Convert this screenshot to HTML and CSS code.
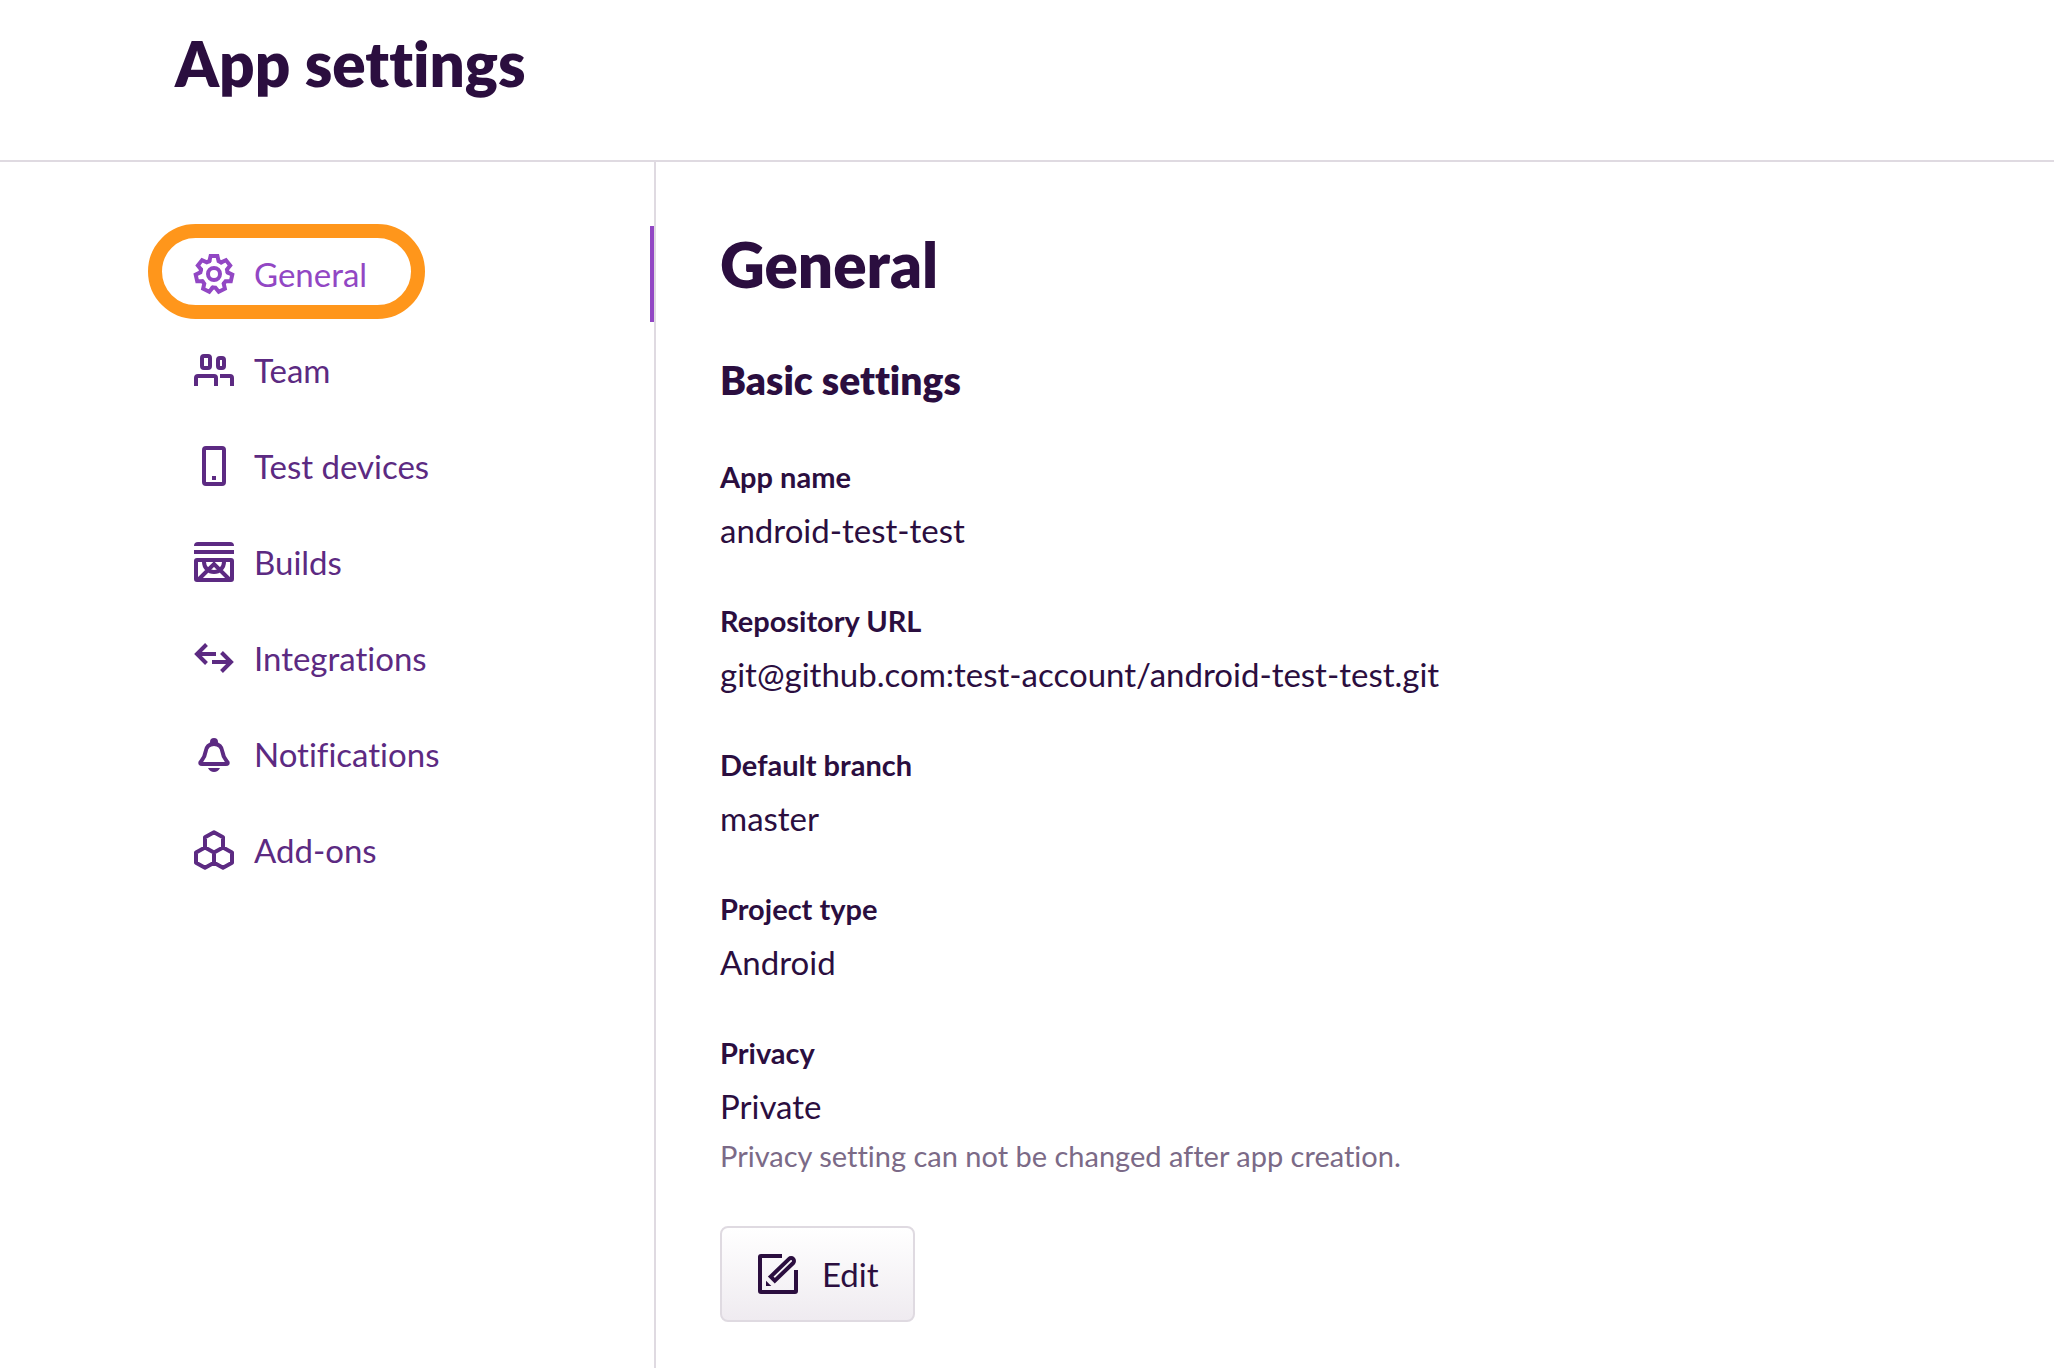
FILE: index.html
```html
<!DOCTYPE html>
<html lang="en">
<head>
<meta charset="utf-8">
<meta name="viewport" content="width=device-width, initial-scale=1">
<title>App settings</title>
<link rel="stylesheet" href="styles.css">
</head>
<body>
<header class="page-header">
  <h1 class="page-title">App settings</h1>
</header>
<div class="layout">
  <nav class="sidebar" aria-label="App settings">
    <a class="nav-item nav-item-active" href="#general" aria-current="page">
      <svg class="icon" viewBox="0 0 48 48" aria-hidden="true">
        <g transform="translate(24 24)">
          <path id="tooth" stroke-linecap="round" d="M-4.6 -12.9L-3.4 -18H3.4L4.6 -12.9L7.2 -11.6"/>
          <use href="#tooth" transform="rotate(51.43)"/>
          <use href="#tooth" transform="rotate(102.86)"/>
          <use href="#tooth" transform="rotate(154.29)"/>
          <use href="#tooth" transform="rotate(205.71)"/>
          <use href="#tooth" transform="rotate(257.14)"/>
          <use href="#tooth" transform="rotate(308.57)"/>
          <circle r="6"/>
        </g>
      </svg>
      <span>General</span>
    </a>
    <a class="nav-item" href="#team">
      <svg class="icon" viewBox="0 0 48 48" aria-hidden="true">
        <rect x="12" y="10" width="8" height="12" rx="2"/>
        <rect x="28" y="12" width="6" height="10" rx="2"/>
        <path d="M6 40V32q0-2 2-2H24q2 0 2 2V40M30 30H40q2 0 2 2V40"/>
      </svg>
      <span>Team</span>
    </a>
    <a class="nav-item" href="#devices">
      <svg class="icon" viewBox="0 0 48 48" aria-hidden="true">
        <rect x="14" y="6" width="20" height="36" rx="2"/>
        <path d="M22 36h4"/>
      </svg>
      <span>Test devices</span>
    </a>
    <a class="nav-item" href="#builds">
      <svg class="icon" viewBox="0 0 48 48" aria-hidden="true">
        <path class="solid" d="M4 8q0-4 4-4H40q4 0 4 4z"/>
        <path d="M4 14H44"/>
        <rect x="6" y="22" width="36" height="20" rx="1"/>
        <path d="M14 24a10 10 0 0 0 20 0M8 42L24 26L40 42"/>
      </svg>
      <span>Builds</span>
    </a>
    <a class="nav-item" href="#integrations">
      <svg class="icon" viewBox="0 0 48 48" aria-hidden="true">
        <path d="M16.5 10.5L7 20l9.5 9.5M7 20H26M31.5 18.5L41 28l-9.5 9.5M41 28H22"/>
      </svg>
      <span>Integrations</span>
    </a>
    <a class="nav-item" href="#notifications">
      <svg class="icon" viewBox="0 0 48 48" aria-hidden="true">
        <circle class="solid" cx="24" cy="12" r="4"/>
        <path d="M24 14C18 14 16 18 15.5 22C15 27 13 29 10.6 32Q9.6 34 12 34H36Q38.4 34 37.4 32C35 29 33 27 32.5 22C32 18 30 14 24 14Z"/>
        <path class="solid" d="M18 38H30Q28 42 24 42Q20 42 18 38Z"/>
      </svg>
      <span>Notifications</span>
    </a>
    <a class="nav-item" href="#addons">
      <svg class="icon" viewBox="0 0 48 48" aria-hidden="true">
        <path stroke-linejoin="round" d="M15 21.5V11.3L24 6.3L33 11.3V21.5L24 26.5ZM24 26.5V36.7L15 41.7L6 36.7V26.5L15 21.5M33 21.5L42 26.5V36.7L33 41.7L24 36.7"/>
      </svg>
      <span>Add-ons</span>
    </a>
  </nav>
  <main class="content">
    <h2 class="section-title">General</h2>
    <h3 class="group-title">Basic settings</h3>
    <dl class="fields">
      <div class="field"><dt>App name</dt><dd>android-test-test</dd></div>
      <div class="field"><dt>Repository URL</dt><dd>git@github.com:test-account/android-test-test.git</dd></div>
      <div class="field"><dt>Default branch</dt><dd>master</dd></div>
      <div class="field"><dt>Project type</dt><dd>Android</dd></div>
      <div class="field"><dt>Privacy</dt><dd>Private</dd><dd class="hint">Privacy setting can not be changed after app creation.</dd></div>
    </dl>
    <button class="edit-button" type="button">
      <svg class="icon" viewBox="0 0 48 48" aria-hidden="true">
        <path d="M28 6H7Q6 6 6 7V41Q6 42 7 42H41Q42 42 42 41V20"/>
        <path d="M16.7 26.6L35.1 8.9A2.9 2.9 0 0 1 39.2 13L20.8 30.7Z"/>
        <path class="solid" d="M12 30.7V36H17.3Z"/>
      </svg>
      <span>Edit</span>
    </button>
  </main>
</div>
</body>
</html>
```
FILE: styles.css
```css
*,
*::after {
  box-sizing: border-box;
}

body {
  margin: 0;
  min-height: 100vh;
  display: flex;
  flex-direction: column;
  background: #fff;
  color: #2b0e3f;
  font-family: Lato, "Open Sans", sans-serif;
  font-size: 33px;
  line-height: 48px;
  font-variant-ligatures: none;
}

h1, h2, h3, dl, dd {
  margin: 0;
}

.page-header {
  padding: 31px 175px 65px;
  border-bottom: 2px solid #dfdae1;
}

.page-title,
.section-title {
  font-size: 62px;
  line-height: 64px;
  font-weight: 800;
}

.layout {
  flex: 1;
  display: flex;
}

.sidebar {
  flex: 0 0 656px;
  padding: 64px 0 0;
  border-right: 2px solid #dfdae1;
}

.nav-item {
  position: relative;
  display: flex;
  align-items: center;
  gap: 16px;
  height: 96px;
  padding-left: 190px;
  color: #5c2a82;
  text-decoration: none;
}

.nav-item-active {
  color: #9247c4;
  border-right: 4px solid #9247c4;
}

/* Highlight ring around the current item */
.nav-item-active::after {
  content: "";
  position: absolute;
  left: 148px;
  top: -2px;
  width: 277px;
  height: 95px;
  border: 14px solid #ff961b;
  border-radius: 48px;
}

.icon {
  flex: none;
  width: 48px;
  height: 48px;
  fill: none;
  stroke: currentColor;
  stroke-width: 4;
}

.icon .solid {
  fill: currentColor;
  stroke: none;
}

.content {
  flex: 1;
  padding: 70px 64px 40px;
}

.group-title {
  margin-top: 60px;
  font-size: 39px;
  line-height: 48px;
  font-weight: 800;
}

.fields {
  margin-top: 52px;
}

.field {
  margin-bottom: 46px;
}

.field dt {
  font-size: 29px;
  line-height: 42px;
  font-weight: 700;
}

.field dd {
  padding-top: 8px;
}

.field .hint {
  padding-top: 2px;
  color: #7b6a87;
  font-size: 29px;
}

.edit-button {
  display: flex;
  align-items: center;
  gap: 20px;
  height: 96px;
  padding: 0 34px 0 32px;
  border: 2px solid #dfdae1;
  border-radius: 8px;
  background: linear-gradient(#fff, #efebf0);
  color: inherit;
  font: inherit;
}
```
